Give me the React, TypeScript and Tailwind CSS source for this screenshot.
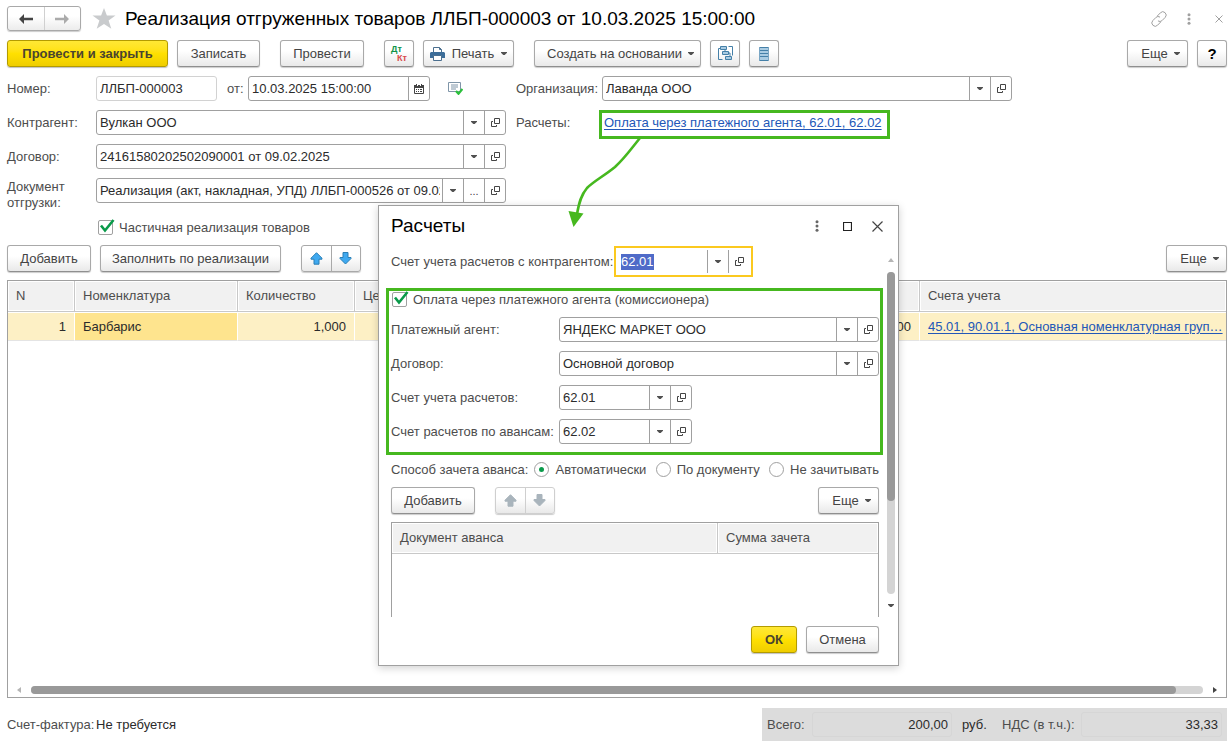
import { useEffect, useRef, type ReactNode } from "react";
import clsx from "clsx";

const buttonBase =
  "flex shrink-0 items-center justify-center whitespace-nowrap rounded-[3px] border h-[27px]";
const buttonPlain =
  "border-[#a9a9a9] border-b-[#8f8f8f] bg-linear-to-b from-white from-40% to-[#e9e9e9] shadow-[0_1px_1px_#00000033] text-[#444]";
const buttonPrimary =
  "border-[#b39b00] bg-linear-to-b from-[#ffe834] via-[#ffe000] to-[#efcd00] shadow-[0_1px_1px_#00000040] font-bold text-[#4a4430]";

function Button({
  children,
  className,
  primary = false,
  label,
}: {
  children: ReactNode;
  className?: string;
  primary?: boolean;
  label?: string;
}) {
  return (
    <button
      type="button"
      aria-label={label}
      className={clsx(buttonBase, primary ? buttonPrimary : buttonPlain, className)}
    >
      {children}
    </button>
  );
}

function Caret() {
  return (
    <svg width="6" height="3" viewBox="0 0 6 3" className="shrink-0" aria-hidden="true">
      <path d="M0 0h6v.7L3.7 3H2.300L0 .7z" fill="#505050" />
    </svg>
  );
}

function OpenIcon() {
  return (
    <svg width="9" height="9" viewBox="0 0 9 9" fill="none" stroke="#444" aria-hidden="true">
      <path d="M3.500.5h5v5h-5z" />
      <path d="M2 3.500H.5v5h5V7" />
    </svg>
  );
}

function CalendarIcon() {
  return (
    <svg width="10" height="10" viewBox="0 0 10 10" aria-hidden="true">
      <path d="M.5 1.500h9v8h-9z" fill="#fff" stroke="#444" />
      <path d="M0 1h10v3H0z" fill="#444" />
      <path d="M2 0h1v2H2zM7 0h1v2H7z" fill="#444" />
      <path d="M3 1h1v1H3zM6 1h1v1H6z" fill="#fff" />
      <path
        d="M2 5h1v1H2zM4 5h1v1H4zM6 5h2v1H6zM2 7h1v1H2zM4 7h1v1H4zM6 7h2v1H6z"
        fill="#444"
      />
    </svg>
  );
}

function DotsIcon({ color }: { color: string }) {
  return (
    <svg width="4" height="12" viewBox="0 0 4 12" fill={color} aria-hidden="true">
      <circle cx="2" cy="1.7" r="1.5" />
      <circle cx="2" cy="6" r="1.5" />
      <circle cx="2" cy="10.3" r="1.5" />
    </svg>
  );
}

function ArrowIcon({
  dir,
  fill,
  stroke,
}: {
  dir: "up" | "down";
  fill: string;
  stroke: string;
}) {
  return (
    <svg width="13" height="13" viewBox="0 0 13 13" aria-hidden="true">
      <path
        d={
          dir === "up"
            ? "M6.500.7l5.500 5.500v1H9v5H4v-5H1v-1z"
            : "M6.500 12L1 6.500v-1h3v-5h5v5h3v1z"
        }
        fill={fill}
        stroke={stroke}
      />
    </svg>
  );
}

type FieldButton = "list" | "dots" | "open" | "calendar";

const fieldButtonNames: Record<FieldButton, string> = {
  list: "Выбрать из списка",
  dots: "Выбрать",
  open: "Открыть",
  calendar: "Календарь",
};

function Field({
  id,
  value,
  buttons = [],
  className = "flex-1",
  readOnly = false,
}: {
  id: string;
  value: string;
  buttons?: FieldButton[];
  className?: string;
  readOnly?: boolean;
}) {
  return (
    <div
      className={clsx(
        "flex h-[25px] min-w-0 rounded-[3px] border bg-white",
        readOnly ? "border-[#d2d2d2]" : "border-[#a0a0a0]",
        className,
      )}
    >
      <input
        id={id}
        defaultValue={value}
        readOnly={readOnly}
        className="mr-[2px] w-0 min-w-0 flex-1 bg-transparent pl-[3px] text-[#2b2b2b] outline-none"
      />
      {buttons.map((b) => (
        <button
          key={b}
          type="button"
          aria-label={fieldButtonNames[b]}
          className="flex w-[21px] shrink-0 items-center justify-center border-l border-[#a0a0a0] text-[#444]"
        >
          {b === "list" && <Caret />}
          {b === "dots" && <span className="text-[11px]">...</span>}
          {b === "open" && <OpenIcon />}
          {b === "calendar" && <CalendarIcon />}
        </button>
      ))}
    </div>
  );
}

function CheckField({ id, label }: { id: string; label: string }) {
  return (
    <div className="flex h-[15px] items-center gap-[6px]">
      <span className="relative flex size-[15px]">
        <input
          id={id}
          type="checkbox"
          defaultChecked
          className="peer size-[15px] appearance-none rounded-[2px] border border-[#a0a0a0] bg-white"
        />
        <svg
          viewBox="0 0 15 15"
          className="pointer-events-none invisible absolute inset-0 size-[15px] overflow-visible peer-checked:visible"
          aria-hidden="true"
        >
          <path d="M3 5.500l4 5L15.500 0" fill="none" stroke="#0a9a4a" strokeWidth="2.600" />
        </svg>
      </span>
      <label htmlFor={id}>{label}</label>
    </div>
  );
}

function RadioField({
  id,
  label,
  checked = false,
}: {
  id: string;
  label: string;
  checked?: boolean;
}) {
  return (
    <span className="flex items-center gap-[6px] whitespace-nowrap">
      <span className="relative flex size-[15px]">
        <input
          id={id}
          type="radio"
          name="advance"
          defaultChecked={checked}
          className="peer size-[15px] appearance-none rounded-full border border-[#a0a0a0] bg-white"
        />
        <span className="pointer-events-none invisible absolute inset-[5px] rounded-full bg-[#0a9a4a] peer-checked:visible" />
      </span>
      <label htmlFor={id}>{label}</label>
    </span>
  );
}

function MoveButtons({ disabled = false }: { disabled?: boolean }) {
  const fill = disabled ? "#a9b4bc" : "#3fa9f0";
  const stroke = disabled ? "#a9b4bc" : "#2b7fb5";
  return (
    <div
      className={clsx(
        "flex h-[27px] w-[60px] shrink-0 rounded-[3px] border bg-linear-to-b from-white from-40% to-[#e9e9e9] shadow-[0_1px_1px_#00000033]",
        disabled ? "border-[#cfcfcf]" : "border-[#a9a9a9]",
      )}
    >
      <button
        type="button"
        disabled={disabled}
        aria-label="Переместить вверх"
        className="flex flex-1 items-center justify-center"
      >
        <ArrowIcon dir="up" fill={fill} stroke={stroke} />
      </button>
      <button
        type="button"
        disabled={disabled}
        aria-label="Переместить вниз"
        className={clsx(
          "flex flex-1 items-center justify-center border-l",
          disabled ? "border-[#cfcfcf]" : "border-[#a9a9a9]",
        )}
      >
        <ArrowIcon dir="down" fill={fill} stroke={stroke} />
      </button>
    </div>
  );
}

function MoreButton() {
  return (
    <Button className="w-[61px] gap-[6px] pl-[6px]">
      Еще
      <Caret />
    </Button>
  );
}

function TitleBar() {
  return (
    <header className="flex h-[25px] items-center">
      <div className="flex h-[25px] w-[74px] shrink-0 rounded-[3px] border border-[#a9a9a9] bg-linear-to-b from-white from-40% to-[#ececec] shadow-[0_1px_1px_#00000033]">
        <button type="button" aria-label="Назад" className="flex flex-1 items-center justify-center">
          <svg width="14" height="10" viewBox="0 0 14 10" aria-hidden="true">
            <path d="M0 5l5-5v3.800h9v2.400H5V10z" fill="#444" />
          </svg>
        </button>
        <button
          type="button"
          aria-label="Вперед"
          className="flex flex-1 items-center justify-center border-l border-[#d0d0d0]"
        >
          <svg width="14" height="10" viewBox="0 0 14 10" aria-hidden="true">
            <path d="M14 5L9 0v3.800H0v2.400h9V10z" fill="#ababab" />
          </svg>
        </button>
      </div>
      <button type="button" aria-label="В избранное" className="ml-[11px] shrink-0">
        <svg width="24" height="22" viewBox="0 0 24 22" aria-hidden="true">
          <path
            d="M12 0l2.900 7.500H23.500l-6.900 5.100 2.700 8.200L12 15.900l-7.300 4.900 2.700-8.200L.5 7.500h8.600z"
            fill="#c9cbcd"
          />
        </svg>
      </button>
      <h1 className="ml-[9px] flex-1 truncate text-[19px] leading-6 text-black">
        Реализация отгруженных товаров ЛЛБП-000003 от 10.03.2025 15:00:00
      </h1>
      <div className="flex shrink-0 items-center pr-[4px]">
        <button type="button" aria-label="Получить ссылку">
          <svg
            width="16"
            height="16"
            viewBox="0 0 16 16"
            fill="none"
            stroke="#a0a0a0"
            strokeLinecap="round"
            aria-hidden="true"
          >
            <path d="M6.500 4.800l2.900-3a3.300 3.300 0 0 1 4.800 4.600l-3.300 3.300a3 3 0 0 1-3.600.4" />
            <path d="M9.500 11.200l-2.900 3a3.300 3.300 0 0 1-4.800-4.600l3.300-3.300a3 3 0 0 1 3.600-.4" />
          </svg>
        </button>
        <button type="button" aria-label="Меню" className="ml-[20px]">
          <DotsIcon color="#a0a0a0" />
        </button>
        <button type="button" aria-label="Закрыть" className="ml-[24px]">
          <svg width="8" height="8" viewBox="0 0 8 8" stroke="#a0a0a0" aria-hidden="true">
            <path d="M.5.5l7 7M7.500.5l-7 7" />
          </svg>
        </button>
      </div>
    </header>
  );
}

function Toolbar() {
  return (
    <div className="flex items-center justify-between">
      <div className="flex gap-[20px]">
        <div className="flex gap-[9px]">
          <Button primary className="w-[161px]">
            Провести и закрыть
          </Button>
          <Button className="w-[83px]">Записать</Button>
        </div>
        <Button className="w-[84px]">Провести</Button>
        <div className="flex gap-[9px]">
          <Button className="w-[30px]" label="Показать проводки">
            <span className="grid text-left text-[9px] font-bold leading-[9px]">
              <span className="text-[#0f9347]">Дт</span>
              <span className="pl-[6px] text-[#d94a4a]">Кт</span>
            </span>
          </Button>
          <Button className="w-[91px] gap-[7px]">
            <svg width="15" height="14" viewBox="0 0 15 14" aria-hidden="true">
              <path d="M3.500 5V.5h6l2 2V5" fill="#fff" stroke="#4b6f8f" />
              <path d="M9.500.5v2h2" fill="none" stroke="#4b6f8f" />
              <path d="M1 5h13l1 1v5h-3V9H3v2H0V6z" fill="#3c6d99" />
              <path d="M3.500 8.500h8v5h-8z" fill="#fff" stroke="#4b6f8f" />
            </svg>
            <span>Печать</span>
            <Caret />
          </Button>
        </div>
        <div className="flex gap-[9px]">
          <Button className="w-[167px] gap-[6px] pl-[6px]">
            Создать на основании
            <Caret />
          </Button>
          <Button className="w-[30px]" label="Структура подчиненности">
            <svg width="15" height="15" viewBox="0 0 15 15" fill="#a9cbe2" stroke="#4580a8" aria-hidden="true">
              <path d="M2.500.5h6v3h-6zM4.500 5.500h6v3h-6zM7.500 10.500h6v3h-6z" />
              <path d="M2 2.500H.5v11h4M10.500.5h4v9M10.500 7h1.500v3M7 3.500v2" fill="none" />
            </svg>
          </Button>
          <Button className="w-[30px]" label="Реестр">
            <svg width="10" height="14" viewBox="0 0 10 14" aria-hidden="true">
              <path d="M0 0h10v14H0z" fill="#a9cbe2" />
              <path
                d="M0 .5h10M0 3.500h10M0 6.500h10M0 9.500h10M0 13.500h10"
                stroke="#4580a8"
              />
              <path d="M.5 0v14M9.500 0v14" stroke="#7aa6c4" />
            </svg>
          </Button>
        </div>
      </div>
      <div className="flex gap-[9px]">
        <MoreButton />
        <Button className="w-[30px] text-[15px] font-bold">
          <span className="text-black">?</span>
        </Button>
      </div>
    </div>
  );
}

const labelClass = "w-[89px] shrink-0";

function DocumentForm() {
  return (
    <div className="flex gap-[10px]">
      <div className="flex max-w-[499px] flex-1 flex-col gap-[9px]">
        <div className="flex items-center">
          <label htmlFor="number" className={labelClass}>
            Номер:
          </label>
          <Field id="number" value="ЛЛБП-000003" readOnly className="w-[121px]" />
          <label htmlFor="date" className="w-[31px] shrink-0 pl-[10px]">
            от:
          </label>
          <Field id="date" value="10.03.2025 15:00:00" buttons={["calendar"]} className="w-[182px]" />
          <button type="button" aria-label="Состояние документа" className="ml-[18px]">
            <svg width="15" height="13" viewBox="0 0 15 13" fill="none" aria-hidden="true">
              <path d="M.5.5h12v9H.5z" fill="#fff" stroke="#7f95a8" />
              <path d="M3 3h7M3 5h7M3 7h5" stroke="#7f95a8" />
              <path d="M8 9l2.500 2.800L14.500 7" stroke="#2cc03c" strokeWidth="2.200" />
            </svg>
          </button>
        </div>
        <div className="flex items-center">
          <label htmlFor="partner" className={labelClass}>
            Контрагент:
          </label>
          <Field id="partner" value="Вулкан ООО" buttons={["list", "open"]} />
        </div>
        <div className="flex items-center">
          <label htmlFor="contract" className={labelClass}>
            Договор:
          </label>
          <Field
            id="contract"
            value="24161580202502090001 от 09.02.2025"
            buttons={["list", "open"]}
          />
        </div>
        <div className="flex items-start">
          <label htmlFor="shipment" className={clsx(labelClass, "pt-px leading-4")}>
            Документ
            <br />
            отгрузки:
          </label>
          <Field
            id="shipment"
            value="Реализация (акт, накладная, УПД) ЛЛБП-000526 от 09.02.2025 15:00:00"
            buttons={["list", "dots", "open"]}
          />
        </div>
        <div className="pl-[91px]">
          <CheckField id="partial" label="Частичная реализация товаров" />
        </div>
      </div>
      <div className="flex max-w-[496px] flex-1 flex-col gap-[9px]">
        <div className="flex items-center">
          <label htmlFor="organization" className="w-[86px] shrink-0">
            Организация:
          </label>
          <Field id="organization" value="Лаванда ООО" buttons={["list", "open"]} />
        </div>
        <div className="flex">
          <span className="w-[83px] shrink-0 leading-[25px]">Расчеты:</span>
          <a
            href="#settlements"
            className="flex h-[29px] items-center whitespace-nowrap border-[3px] border-[#46b81f] pb-[4px] pl-[2px] pr-[5px] text-[#2257b8] underline underline-offset-2"
          >
            Оплата через платежного агента, 62.01, 62.02
          </a>
        </div>
      </div>
    </div>
  );
}

const headCell =
  "h-[31px] border-b border-r border-[#c8c8c8] bg-[#f1f1f1] px-[8px] text-left font-normal shadow-[inset_0_0_0_1px_#fff]";
const bodyCell =
  "h-[29px] whitespace-nowrap border-y border-r border-white border-b-[#e4e4e4] pl-[8px] text-[#2b2b2b]";

function GoodsTable() {
  return (
    <div className="flex flex-1 flex-col justify-between border border-[#a0a0a0]">
      <table className="w-full table-fixed border-separate border-spacing-0">
        <colgroup>
          <col className="w-[67px]" />
          <col className="w-[163px]" />
          <col className="w-[117px]" />
          <col />
          <col />
          <col className="w-[306px]" />
        </colgroup>
        <thead>
          <tr>
            <th className={headCell}>N</th>
            <th className={headCell}>Номенклатура</th>
            <th className={headCell}>Количество</th>
            <th className={headCell}>Цена</th>
            <th className={headCell} />
            <th className={clsx(headCell, "border-r-0")}>Счета учета</th>
          </tr>
        </thead>
        <tbody>
          <tr className="bg-[#fdf0c5]">
            <td className={clsx(bodyCell, "pr-[8px] text-right")}>1</td>
            <td className={clsx(bodyCell, "bg-[#fee48e] pr-[8px]")}>Барбарис</td>
            <td className={clsx(bodyCell, "pr-[8px] text-right")}>1,000</td>
            <td className={bodyCell} />
            <td className={clsx(bodyCell, "pr-[8px] text-right")}>200,00</td>
            <td className={clsx(bodyCell, "border-r-0")}>
              <a href="#accounts" className="text-[#2257b8] underline underline-offset-2">
                45.01, 90.01.1, Основная номенклатурная груп…
              </a>
            </td>
          </tr>
        </tbody>
      </table>
      <div className="flex h-[14px] items-center px-[9px]">
        <svg width="4" height="6" viewBox="0 0 4 6" aria-hidden="true">
          <path d="M4 0v6L0 3z" fill="#b5b5b5" />
        </svg>
        <div className="mx-[10px] h-[8px] flex-1 rounded-full bg-[#d4d4d4] pr-[27px]">
          <div className="h-full rounded-full bg-[#999]" />
        </div>
        <svg width="4" height="6" viewBox="0 0 4 6" aria-hidden="true">
          <path d="M0 0v6l4-3z" fill="#444" />
        </svg>
      </div>
    </div>
  );
}

function Footer() {
  return (
    <footer className="flex h-[33px] items-center">
      <span className={labelClass}>Счет-фактура:</span>
      <span className="flex-1 text-[#2b2b2b]">Не требуется</span>
      <div className="flex h-[33px] items-center bg-[#dcdcdc] px-[5px]">
        <label htmlFor="total" className="w-[45px]">
          Всего:
        </label>
        <input
          id="total"
          readOnly
          defaultValue="200,00"
          className="h-[25px] w-[140px] rounded-[3px] border border-[#d6d6d6] bg-transparent pr-[3px] text-right text-[#2b2b2b]"
        />
        <span className="w-[50px] pl-[10px] text-[#2b2b2b]">руб.</span>
        <label htmlFor="vat" className="w-[79px] whitespace-nowrap">
          НДС (в т.ч.):
        </label>
        <input
          id="vat"
          readOnly
          defaultValue="33,33"
          className="h-[25px] w-[141px] rounded-[3px] border border-[#d6d6d6] bg-transparent pr-[3px] text-right text-[#2b2b2b]"
        />
      </div>
    </footer>
  );
}

function AccountField() {
  const ref = useRef<HTMLInputElement>(null);
  useEffect(() => {
    ref.current?.focus();
    ref.current?.select();
  }, []);
  return (
    <div className="flex h-[31px] w-[139px] border-2 border-[#fbc91f] bg-white py-[2px] pr-[2px]">
      <input
        ref={ref}
        id="account"
        defaultValue="62.01"
        className="w-0 min-w-0 flex-1 pl-[5px] text-[#2b2b2b] outline-none selection:bg-[#4f6bc8] selection:text-white"
      />
      <button
        type="button"
        aria-label={fieldButtonNames.list}
        className="flex w-[21px] items-center justify-center border-l border-[#a0a0a0]"
      >
        <Caret />
      </button>
      <button
        type="button"
        aria-label={fieldButtonNames.open}
        className="flex w-[21px] items-center justify-center border-l border-[#a0a0a0]"
      >
        <OpenIcon />
      </button>
    </div>
  );
}

function SettlementsDialog() {
  return (
    <section
      role="dialog"
      aria-labelledby="dialog-title"
      className="absolute left-[378px] top-[205px] flex w-[521px] flex-col border border-[#a0a0a0] bg-white shadow-[0_2px_8px_#00000030]"
    >
      <div className="flex h-[40px] items-center pl-[12px] pr-[15px]">
        <h2 id="dialog-title" className="flex-1 text-[19px] leading-6 text-black">
          Расчеты
        </h2>
        <button type="button" aria-label="Меню">
          <DotsIcon color="#666" />
        </button>
        <button type="button" aria-label="Развернуть" className="ml-[24px]">
          <svg width="9" height="9" viewBox="0 0 9 9" fill="none" stroke="#222" aria-hidden="true">
            <path d="M.5.5h8v8h-8z" strokeWidth="1.200" />
          </svg>
        </button>
        <button type="button" aria-label="Закрыть" className="ml-[20px]">
          <svg width="11" height="11" viewBox="0 0 11 11" stroke="#444" aria-hidden="true">
            <path d="M.5.5l10 10M10.500.5l-10 10" strokeWidth="1.200" />
          </svg>
        </button>
      </div>

      <div className="flex">
        <div className="w-[508px]">
          <div className="flex items-center pl-[12px]">
            <label htmlFor="account" className="w-[223px] shrink-0 whitespace-nowrap">
              Счет учета расчетов с контрагентом:
            </label>
            <AccountField />
          </div>

          <div className="ml-[7px] mr-[4px] mt-[11px] flex flex-col gap-[9px] border-[3px] border-[#46b81f] pb-[8px] pl-[2px] pr-px">
            <div className="py-px pl-px">
              <CheckField id="agent-payment" label="Оплата через платежного агента (комиссионера)" />
            </div>
            <div className="flex items-center">
              <label htmlFor="agent" className="w-[168px] shrink-0">
                Платежный агент:
              </label>
              <Field id="agent" value="ЯНДЕКС МАРКЕТ ООО" buttons={["list", "open"]} />
            </div>
            <div className="flex items-center">
              <label htmlFor="agent-contract" className="w-[168px] shrink-0">
                Договор:
              </label>
              <Field id="agent-contract" value="Основной договор" buttons={["list", "open"]} />
            </div>
            <div className="flex items-center">
              <label htmlFor="settlement-account" className="w-[168px] shrink-0">
                Счет учета расчетов:
              </label>
              <Field
                id="settlement-account"
                value="62.01"
                buttons={["list", "open"]}
                className="w-[133px]"
              />
            </div>
            <div className="flex items-center">
              <label htmlFor="advance-account" className="w-[168px] shrink-0 whitespace-nowrap">
                Счет расчетов по авансам:
              </label>
              <Field
                id="advance-account"
                value="62.02"
                buttons={["list", "open"]}
                className="w-[133px]"
              />
            </div>
          </div>

          <div
            role="radiogroup"
            aria-labelledby="advance-label"
            className="mt-[7px] flex h-[15px] items-center justify-between pl-[12px] pr-[8px]"
          >
            <div className="flex items-center gap-[6px]">
              <span id="advance-label" className="whitespace-nowrap">
                Способ зачета аванса:
              </span>
              <RadioField id="advance-auto" label="Автоматически" checked />
            </div>
            <RadioField id="advance-document" label="По документу" />
            <RadioField id="advance-none" label="Не зачитывать" />
          </div>

          <div className="mt-[10px] flex items-center pl-[12px] pr-[8px]">
            <Button className="w-[84px]">Добавить</Button>
            <div className="ml-[20px] flex-1">
              <MoveButtons disabled />
            </div>
            <MoreButton />
          </div>

          <div className="ml-[12px] mr-[8px] mt-[8px] h-[95px] border border-b-0 border-[#a0a0a0]">
            <table className="w-full table-fixed border-separate border-spacing-0">
              <colgroup>
                <col />
                <col className="w-[160px]" />
              </colgroup>
              <thead>
                <tr>
                  <th className={headCell}>Документ аванса</th>
                  <th className={clsx(headCell, "border-r-0")}>Сумма зачета</th>
                </tr>
              </thead>
            </table>
          </div>
        </div>

        <div className="flex w-[8px] flex-col items-center pb-[10px] pt-[12px]">
          <svg width="6" height="4" viewBox="0 0 6 4" aria-hidden="true">
            <path d="M0 4h6L3 0z" fill="#b5b5b5" />
          </svg>
          <div className="my-[10px] w-full flex-1 rounded-full bg-[#d4d4d4]">
            <div className="h-[71%] w-full rounded-full bg-[#999]" />
          </div>
          <Caret />
        </div>
      </div>

      <div className="flex justify-end gap-[9px] pb-[12px] pr-[19px] pt-[9px]">
        <Button primary className="w-[46px]">
          ОК
        </Button>
        <Button className="w-[73px]">Отмена</Button>
      </div>
    </section>
  );
}

function Pointer() {
  return (
    <svg
      width="80"
      height="92"
      viewBox="565 137 80 92"
      className="pointer-events-none absolute left-[565px] top-[137px]"
      aria-hidden="true"
    >
      <path
        d="M640 138C631 149 625 158 615 167C604 176 594 181 587 188C581 195 579 203 577 214"
        fill="none"
        stroke="#46b81f"
        strokeWidth="2.600"
      />
      <path d="M568.500 211l15 2.500L573.500 227z" fill="#46b81f" />
    </svg>
  );
}

export default function App() {
  return (
    <main className="relative flex min-h-screen flex-col bg-white pb-[10px] pl-[7px] pr-[2px] pt-[6px] font-['Liberation_Sans',Arial,sans-serif] text-[13px] leading-4 text-[#4d4d4d]">
      <div className="flex flex-col gap-[9px]">
        <TitleBar />
        <Toolbar />
        <DocumentForm />
      </div>
      <div className="mb-[8px] mt-[10px] flex items-center justify-between">
        <div className="flex gap-[20px]">
          <div className="flex gap-[9px]">
            <Button className="w-[84px]">Добавить</Button>
            <Button className="w-[181px]">Заполнить по реализации</Button>
          </div>
          <MoveButtons />
        </div>
        <MoreButton />
      </div>
      <GoodsTable />
      <div className="mt-[10px]">
        <Footer />
      </div>
      <SettlementsDialog />
      <Pointer />
    </main>
  );
}
